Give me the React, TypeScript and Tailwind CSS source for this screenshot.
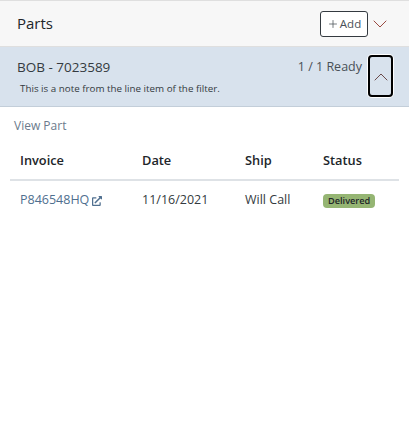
import { ChevronDown, ChevronUp, Plus } from 'lucide-react';
import { FaExternalLinkAlt } from 'react-icons/fa';

const FONT = { fontFamily: '"Open Sans", "Noto Sans", sans-serif' };

export default function App() {
  return (
    <div className="w-[409px] h-[448px] bg-white text-[#212529] overflow-hidden" style={FONT}>
      <div className="h-[47px] bg-[#f7f7f7] border-t border-b border-[#dfdfdf] flex items-center pl-[17px] pr-[17px]">
        <h1 className="text-[15px] font-medium text-[#212529]">Parts</h1>
        <button
          type="button"
          className="ml-auto h-[26px] w-[48px] border border-[#343a40] rounded-[3px] flex items-center justify-center gap-[1px] text-[11.5px] text-[#495057] bg-white"
        >
          <Plus size={12} strokeWidth={1.5} />
          Add
        </button>
        <ChevronDown size={24} strokeWidth={1} className="text-[#9a4a42]" />
      </div>

      <div className="h-[60px] bg-[#d8e2ed] border-b border-[#c3ced9] flex pl-[17px] pr-[16px]">
        <div className="flex-1 pt-[10px]">
          <div className="text-[13.5px] leading-[20px] text-[#343a40]">BOB - 7023589</div>
          <div className="text-[9.8px] leading-[14px] mt-[5px] ml-[3px] text-[#343a40]">
            This is a note from the line item of the filter.
          </div>
        </div>
        <div className="text-[12.5px] leading-[20px] pt-[10px] text-[#495057]">1 / 1 Ready</div>
        <button
          type="button"
          className="ml-[6px] mt-[8px] h-[42px] w-[25px] border-[2px] border-black rounded-[4px] flex items-center justify-center shadow-[0_0_0_1px_#ffffff]"
        >
          <ChevronUp size={24} strokeWidth={1} className="text-[#6b4a4a] shrink-0 mt-[2px]" />
        </button>
      </div>

      <div className="pl-[14px] pt-[10px] text-[12px] leading-[18px] text-[#6b7a8c]">View Part</div>

      <div className="mx-[10px] mt-[15px]">
        <div className="grid grid-cols-[122px_103px_78px_1fr] h-[31px] border-b-2 border-[#dee2e6] pl-[10px] text-[12.8px] font-semibold text-[#212529] leading-[20px]">
          <div>Invoice</div>
          <div>Date</div>
          <div>Ship</div>
          <div>Status</div>
        </div>
        <div className="grid grid-cols-[122px_103px_78px_1fr] items-center h-[39px] pl-[10px] text-[12.5px] text-[#343a40]">
          <div className="flex items-center gap-[3px] text-[#4f6f8f]">
            P846548HQ
            <FaExternalLinkAlt size={10} />
          </div>
          <div>11/16/2021</div>
          <div>Will Call</div>
          <div>
            <span className="inline-block bg-[#95b573] rounded-[4px] px-[5px] text-[9.2px] leading-[14px] font-semibold text-[#212529]">
              Delivered
            </span>
          </div>
        </div>
      </div>
    </div>
  );
}
